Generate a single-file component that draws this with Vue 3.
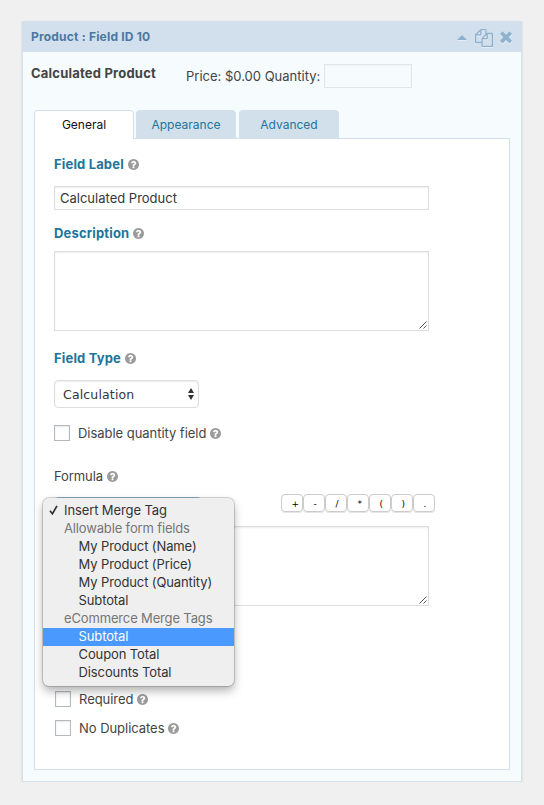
<template>
  <div class="field-panel">
    <div class="field-header">
      <span class="field-id">Product : Field ID 10</span>
      <div class="field-actions">
        <svg class="icon-caret" viewBox="0 0 10 5"><path d="M5 0L10 5H0z" /></svg>
        <svg class="icon-copy" viewBox="0 0 1792 1792"><path :d="icons.copy" /></svg>
        <svg class="icon-close" viewBox="302 302 1188 1252"><path :d="icons.close" /></svg>
      </div>
    </div>

    <div class="preview">
      <span class="preview-label">Calculated Product</span>
      <span class="preview-price">Price: $0.00 Quantity:</span>
      <div class="preview-qty"></div>
    </div>

    <div class="tabs">
      <div v-for="tab in tabs" :key="tab" class="tab" :class="{ active: tab === activeTab }">
        <span>{{ tab }}</span>
      </div>
    </div>

    <div class="settings">
      <div class="label">
        <span>Field Label</span>
        <svg class="help" viewBox="128 128 1536 1536"><path :d="icons.help" /></svg>
      </div>
      <div class="text-input"><span>Calculated Product</span></div>

      <div class="label label-desc">
        <span>Description</span>
        <svg class="help" viewBox="128 128 1536 1536"><path :d="icons.help" /></svg>
      </div>
      <div class="textarea">
        <svg class="grip" viewBox="0 0 8 8"><path d="M0.5 7.5L7.5 0.5M4.5 7.5L7.5 4.5" /></svg>
      </div>

      <div class="label label-type">
        <span>Field Type</span>
        <svg class="help" viewBox="128 128 1536 1536"><path :d="icons.help" /></svg>
      </div>
      <div class="select">
        <span>Calculation</span>
        <svg class="arrows" viewBox="0 0 6 12"><path d="M3 0L6 5H0zM0 7H6L3 12z" /></svg>
      </div>

      <div class="check check-disable">
        <div class="box"></div>
        <span>Disable quantity field</span>
        <svg class="help" viewBox="128 128 1536 1536"><path :d="icons.help" /></svg>
      </div>

      <div class="label label-formula">
        <span>Formula</span>
        <svg class="help" viewBox="128 128 1536 1536"><path :d="icons.help" /></svg>
      </div>

      <div class="formula">
        <div class="formula-bar">
          <div class="merge-select"></div>
          <div class="keys">
            <div v-for="key in keys" :key="key" class="key">{{ key }}</div>
          </div>
        </div>
        <div class="textarea">
          <svg class="grip" viewBox="0 0 8 8"><path d="M0.5 7.5L7.5 0.5M4.5 7.5L7.5 4.5" /></svg>
        </div>
        <div class="menu">
          <div v-for="(item, i) in menu" :key="i" class="menu-item" :class="item.type">
            <svg v-if="item.type === 'checked'" class="tick" viewBox="0 0 9 10">
              <path d="M1 5.8L3.4 8.8L8 0.8" />
            </svg>
            <span>{{ item.text }}</span>
          </div>
        </div>
      </div>

      <div class="check check-required">
        <div class="box"></div>
        <span>Required</span>
        <svg class="help" viewBox="128 128 1536 1536"><path :d="icons.help" /></svg>
      </div>
      <div class="check check-dup">
        <div class="box"></div>
        <span>No Duplicates</span>
        <svg class="help" viewBox="128 128 1536 1536"><path :d="icons.help" /></svg>
      </div>
    </div>
  </div>
</template>

<script setup>
import { ref } from 'vue'

const tabs = ['General', 'Appearance', 'Advanced']
const activeTab = ref('General')

const keys = ['+', '-', '/', '*', '(', ')', '.']

const menu = [
  { text: 'Insert Merge Tag', type: 'checked' },
  { text: 'Allowable form fields', type: 'group' },
  { text: 'My Product (Name)', type: 'option' },
  { text: 'My Product (Price)', type: 'option' },
  { text: 'My Product (Quantity)', type: 'option' },
  { text: 'Subtotal', type: 'option' },
  { text: 'eCommerce Merge Tags', type: 'group' },
  { text: 'Subtotal', type: 'option selected' },
  { text: 'Coupon Total', type: 'option' },
  { text: 'Discounts Total', type: 'option' },
]

const icons = {
  copy: 'M1696 384q40 0 68 28t28 68v1216q0 40-28 68t-68 28h-960q-40 0-68-28t-28-68v-288h-544q-40 0-68-28t-28-68v-672q0-40 20-88t48-76l408-408q28-28 76-48t88-20h416q40 0 68 28t28 68v328q68-40 128-40h416zm-544 213l-299 299h299v-299zm-640-384l-299 299h299v-299zm196 647l316-316v-416h-384v416q0 40-28 68t-68 28h-416v640h512v-256q0-40 20-88t48-76zm956 804v-1152h-384v416q0 40-28 68t-68 28h-416v640h896z',
  close: 'M1490 1322q0 40-28 68l-136 136q-28 28-68 28t-68-28l-294-294-294 294q-28 28-68 28t-68-28l-136-136q-28-28-28-68t28-68l294-294-294-294q-28-28-28-68t28-68l136-136q28-28 68-28t68 28l294 294 294-294q28-28 68-28t68 28l136 136q28 28 28 68t-28 68l-294 294 294 294q28 28 28 68z',
  help: 'M1024 1376v-192q0-14-9-23t-23-9h-192q-14 0-23 9t-9 23v192q0 14 9 23t23 9h192q14 0 23-9t9-23zm256-672q0-88-55.5-163t-138.5-116-170-41q-243 0-371 222-15 24 8 42l132 100q7 6 19 6 16 0 25-12 53-68 86-92 34-24 86-24 48 0 85.5 26t37.5 59q0 38-20 61t-68 45q-63 28-115.5 86.5t-52.5 125.5v36q0 14 9 23t23 9h192q14 0 23-9t9-23q0-19 21.5-49.5t54.5-49.5q32-18 49-28.5t46-35 44.5-48 28-60.5 12.5-81zm384 192q0 209-103 385.5t-279.5 279.5-385.5 103-385.5-103-279.5-279.5-103-385.5 103-385.5 279.5-279.5 385.5-103 385.5 103 279.5 279.5 103 385.5z',
}
</script>

<style>
body {
  background: #f0f0f0;
}
</style>

<style scoped>
.field-panel {
  box-sizing: border-box;
  width: 500px;
  height: 761px;
  margin: 21px 0 0 22px;
  background: #f6fbfe;
  border: 1px solid #d2e0eb;
  border-top: 0;
  box-shadow: 0 1px 2px rgba(0, 0, 0, 0.14);
  font-family: Inter, sans-serif;
  font-size: 13px;
  line-height: 20px;
  color: #444;
  white-space: nowrap;
}

.field-header {
  display: flex;
  justify-content: space-between;
  height: 31px;
  padding: 0 9px 0 8px;
  background: #d2e0ed;
}

.field-id {
  font-size: 12px;
  font-weight: 700;
  letter-spacing: 0.2px;
  line-height: 32px;
  color: #4a77a3;
}

.field-actions {
  display: flex;
  align-items: flex-start;
}

.field-actions svg {
  fill: #8eb1cd;
  filter: drop-shadow(0 1px 0 rgba(255, 255, 255, 0.4));
}

.icon-caret {
  width: 10px;
  height: 5px;
  margin-top: 14px;
}

.icon-copy {
  width: 18px;
  height: 18px;
  margin: 8px 7px 0 8px;
}

.icon-close {
  width: 12px;
  height: 12px;
  margin-top: 10px;
}

.preview {
  display: flex;
  height: 58px;
  padding-left: 8px;
}

.preview-label {
  width: 155px;
  padding-top: 11px;
  font-weight: 700;
  letter-spacing: 0.21px;
}

.preview-price {
  width: 138px;
  padding-top: 14px;
}

.preview-qty {
  box-sizing: border-box;
  width: 88px;
  height: 24px;
  margin-top: 12px;
  border: 1px solid #e4e5e6;
  box-shadow: inset 0 1px 2px rgba(0, 0, 0, 0.03);
}

.tabs {
  display: flex;
  gap: 2px;
  height: 28px;
  padding-left: 11px;
}

.tab {
  box-sizing: border-box;
  width: 100px;
  height: 28px;
  border: 1px solid #d2e0eb;
  border-bottom: 0;
  border-radius: 4px 4px 0 0;
  background: #d2e0eb;
  color: #21759b;
  font-size: 12px;
  line-height: 28px;
  text-align: center;
}

.tab:last-child {
  margin-left: 1px;
}

.tab.active {
  position: relative;
  height: 29px;
  background: #fff;
  color: #111;
}

.settings {
  box-sizing: border-box;
  width: 476px;
  height: 632px;
  margin-left: 11px;
  padding: 15px 0 0 19px;
  background: #fff;
  border: 1px solid #d2e0eb;
}

.label {
  display: flex;
  align-items: center;
  gap: 4px;
  height: 20px;
  font-weight: 700;
  letter-spacing: 0.16px;
  color: #21759b;
}

.help {
  width: 11px;
  height: 11px;
  fill: #9b9b9b;
}

.text-input {
  box-sizing: border-box;
  width: 375px;
  height: 24px;
  margin-top: 12px;
  padding-left: 5px;
  border: 1px solid #ddd;
  box-shadow: inset 0 1px 2px rgba(0, 0, 0, 0.07);
  line-height: 23px;
  color: #32373c;
}

.label-desc {
  margin-top: 13px;
}

.textarea {
  display: flex;
  align-items: flex-end;
  justify-content: flex-end;
  box-sizing: border-box;
  width: 375px;
  height: 80px;
  margin-top: 8px;
  padding: 1px;
  border: 1px solid #ddd;
  background: #fff;
  box-shadow: inset 0 1px 2px rgba(0, 0, 0, 0.07);
}

.grip {
  width: 8px;
  height: 8px;
  fill: none;
  stroke: #444;
  stroke-width: 0.9;
}

.label-type {
  margin-top: 17px;
}

.select {
  display: flex;
  align-items: center;
  justify-content: space-between;
  box-sizing: border-box;
  width: 145px;
  height: 28px;
  margin-top: 12px;
  padding: 0 4px 0 8px;
  border: 1px solid #ddd;
  border-radius: 4px;
  box-shadow: inset 0 1px 2px rgba(0, 0, 0, 0.07);
  font-family: 'DejaVu Sans', sans-serif;
  font-size: 12.5px;
  letter-spacing: 0.15px;
  line-height: 22px;
  color: #32373c;
}

.select span {
  padding-top: 1px;
}

.arrows {
  width: 6px;
  height: 12px;
  fill: #333;
}

.check {
  display: flex;
  align-items: center;
  height: 20px;
  letter-spacing: -0.04px;
}

.check span {
  margin: 0 4px 0 8px;
}

.box {
  box-sizing: border-box;
  width: 16px;
  height: 16px;
  border: 1px solid #b4b9be;
  background: #fff;
  box-shadow: inset 0 1px 2px rgba(0, 0, 0, 0.1);
}

.check-disable {
  margin-top: 15px;
}

.label-formula {
  margin-top: 23px;
  font-weight: 400;
  letter-spacing: -0.1px;
  color: #444;
}

.formula {
  position: relative;
  margin-top: 8px;
}

.formula-bar {
  display: flex;
  justify-content: space-between;
  width: 381px;
  height: 24px;
}

.merge-select {
  box-sizing: border-box;
  width: 148px;
  height: 22px;
  margin-top: 3px;
  border: 1px solid #9dbdd4;
  border-radius: 4px;
}

.keys {
  display: flex;
}

.key {
  box-sizing: border-box;
  width: 22px;
  height: 18px;
  padding-left: 9.5px;
  border: 1px solid #ccc;
  border-radius: 4px;
  box-shadow: 0 1px 0 rgba(0, 0, 0, 0.1);
  font-family: 'DejaVu Sans', sans-serif;
  font-size: 9px;
  line-height: 18px;
  color: #000;
}

.menu {
  position: absolute;
  top: 4px;
  left: -11px;
  width: 191px;
  padding: 4px 0;
  border-radius: 6px;
  background: #efefef;
  box-shadow: 0 0 0 1px rgba(0, 0, 0, 0.16), 0 5px 10px rgba(0, 0, 0, 0.3);
}

.menu-item {
  display: flex;
  align-items: center;
  height: 18px;
  letter-spacing: -0.11px;
  line-height: 16px;
  color: #333;
}

.menu-item span {
  height: 18px;
}

.checked {
  padding-left: 6px;
}

.tick {
  width: 9px;
  height: 10px;
  margin: 0 6px 2px 0;
  fill: none;
  stroke: #333;
  stroke-width: 1.7;
}

.group {
  padding-left: 21px;
  letter-spacing: -0.15px;
  color: #767676;
}

.option {
  padding-left: 35.5px;
}

.selected {
  background: #4a99ff;
  color: #fff;
}

.check-required {
  margin: 83px 0 0 1px;
}

.check-dup {
  margin: 9px 0 0 1px;
}
</style>
